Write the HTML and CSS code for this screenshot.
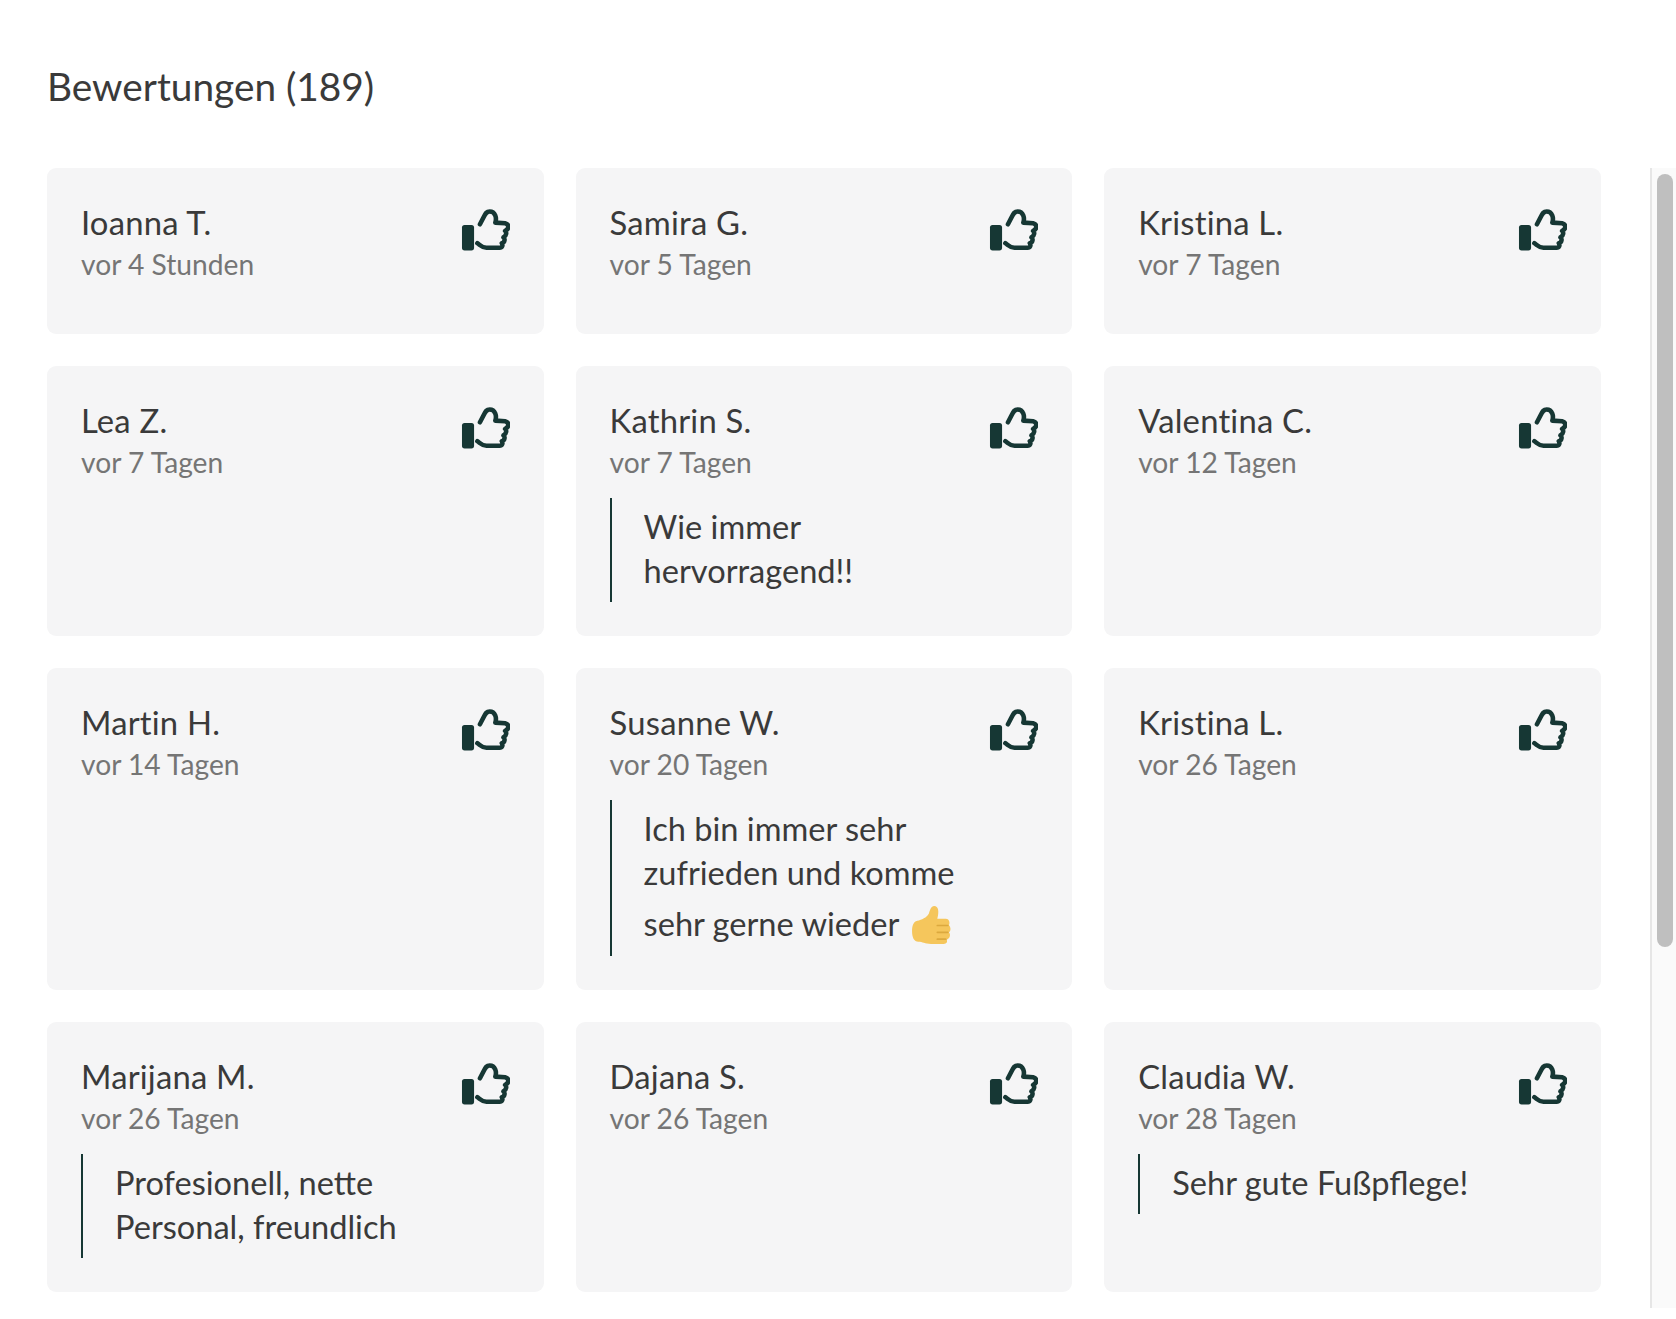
FILE: index.html
```html
<!DOCTYPE html>
<html lang="de">
<head>
<meta charset="utf-8">
<title>Bewertungen</title>
<link rel="stylesheet" href="styles.css">
</head>
<body>
<svg class="defs" width="0" height="0" aria-hidden="true">
  <symbol id="thumb" viewBox="30 40 150 125">
    <rect x="33" y="87" width="37" height="78" rx="8" fill="#163734"/>
    <path d="M80 143C90 150 95 157 108 157L148 157C156 157 159 150 155 143C165 140 165 128 160 125C170 120 170 108 165 105C178 100 178 85 165 82L135 80C140 65 135 46 118 46C108 46 105 52 100 62L88 85" fill="none" stroke="#163734" stroke-width="14" stroke-linecap="round" stroke-linejoin="round"/>
  </symbol>
</svg>
<main class="page">
  <h1 class="title">Bewertungen (189)</h1>
  <div class="layout">
    <section class="grid">
      <article class="card"><header class="head"><div><div class="name">Ioanna T.</div><div class="date">vor 4 Stunden</div></div><svg class="like"><use href="#thumb"/></svg></header></article>
      <article class="card"><header class="head"><div><div class="name">Samira G.</div><div class="date">vor 5 Tagen</div></div><svg class="like"><use href="#thumb"/></svg></header></article>
      <article class="card"><header class="head"><div><div class="name">Kristina L.</div><div class="date">vor 7 Tagen</div></div><svg class="like"><use href="#thumb"/></svg></header></article>

      <article class="card"><header class="head"><div><div class="name">Lea Z.</div><div class="date">vor 7 Tagen</div></div><svg class="like"><use href="#thumb"/></svg></header></article>
      <article class="card"><header class="head"><div><div class="name">Kathrin S.</div><div class="date">vor 7 Tagen</div></div><svg class="like"><use href="#thumb"/></svg></header><blockquote class="comment">Wie immer<br>hervorragend!!</blockquote></article>
      <article class="card"><header class="head"><div><div class="name">Valentina C.</div><div class="date">vor 12 Tagen</div></div><svg class="like"><use href="#thumb"/></svg></header></article>

      <article class="card"><header class="head"><div><div class="name">Martin H.</div><div class="date">vor 14 Tagen</div></div><svg class="like"><use href="#thumb"/></svg></header></article>
      <article class="card"><header class="head"><div><div class="name">Susanne W.</div><div class="date">vor 20 Tagen</div></div><svg class="like"><use href="#thumb"/></svg></header><blockquote class="comment">Ich bin immer sehr<br>zufrieden und komme<br><span class="tall">sehr gerne wieder <svg class="emoji" viewBox="0 0 38 38"><path d="M6 15C10 14 15 12 17 8C18 5 19 1 22 1C26 1 27 6 25 13L33 13C37 13 37 18 36 19C38 21 38 25 36 26C38 28 37 32 34 33C35 36 33 37 30 37L19 37C13 37 11 35 7 35C3 35 1 31 1 25C1 20 2 16 6 15Z" fill="#f5c65c"/><path d="M25 19.500H35M25 26H35M25 32.500H33" stroke="#dca93e" stroke-width="1.600" fill="none" stroke-linecap="round"/></svg></span></blockquote></article>
      <article class="card"><header class="head"><div><div class="name">Kristina L.</div><div class="date">vor 26 Tagen</div></div><svg class="like"><use href="#thumb"/></svg></header></article>

      <article class="card"><header class="head"><div><div class="name">Marijana M.</div><div class="date">vor 26 Tagen</div></div><svg class="like"><use href="#thumb"/></svg></header><blockquote class="comment">Profesionell, nette<br>Personal, freundlich</blockquote></article>
      <article class="card"><header class="head"><div><div class="name">Dajana S.</div><div class="date">vor 26 Tagen</div></div><svg class="like"><use href="#thumb"/></svg></header></article>
      <article class="card"><header class="head"><div><div class="name">Claudia W.</div><div class="date">vor 28 Tagen</div></div><svg class="like"><use href="#thumb"/></svg></header><blockquote class="comment">Sehr gute Fußpflege!</blockquote></article>
    </section>
    <div class="track"><div class="thumb"></div></div>
  </div>
</main>
</body>
</html>
```
FILE: styles.css
```css
* { box-sizing: border-box; }
html, body { margin: 0; background: #fff; }
body { font-family: Lato, "Liberation Sans", sans-serif; color: #3a3a3a; height: 1319px; overflow: hidden; }
.defs { position: absolute; }
.page { padding: 62px 0 0 47px; }
.title { margin: 0 0 56px; font-size: 38.800px; line-height: 48px; padding-bottom: 2px; font-weight: 400; color: #3a3a3a; }
.layout { display: flex; align-items: flex-start; }
.grid { width: 1554px; display: grid; grid-template-columns: repeat(3, 496.6px); column-gap: 32px; row-gap: 32px; }
.card { background: #f5f5f6; border-radius: 9px; padding: 34px; min-height: 166px; }
.head { display: flex; justify-content: space-between; align-items: flex-start; margin-bottom: 16px; }
.name { font-size: 32.800px; line-height: 41px; margin-bottom: 1px; letter-spacing: .2px; color: #3a3a3a; }
.date { font-size: 28.200px; line-height: 40px; color: #757575; }
.like { width: 49px; height: 42px; margin-top: 7px; flex: none; }
.comment { margin: 0; padding: 7px 0 9px 32px; border-left: 2px solid #163734; font-size: 32.600px; line-height: 44px; color: #3a3a3a; }
.tall { display: inline-block; padding-top: 6px; line-height: 46px; }
.emoji { width: 40px; height: 40px; margin-left: 4px; vertical-align: -9px; }
.track { width: 26px; height: 1140px; margin-left: 49px; background: #fafafa; border-left: 2px solid #e6e6e6; padding: 6px 3px 0 5px; }
.thumb { height: 773px; background: #bfbfbf; border-radius: 8px; }
```
